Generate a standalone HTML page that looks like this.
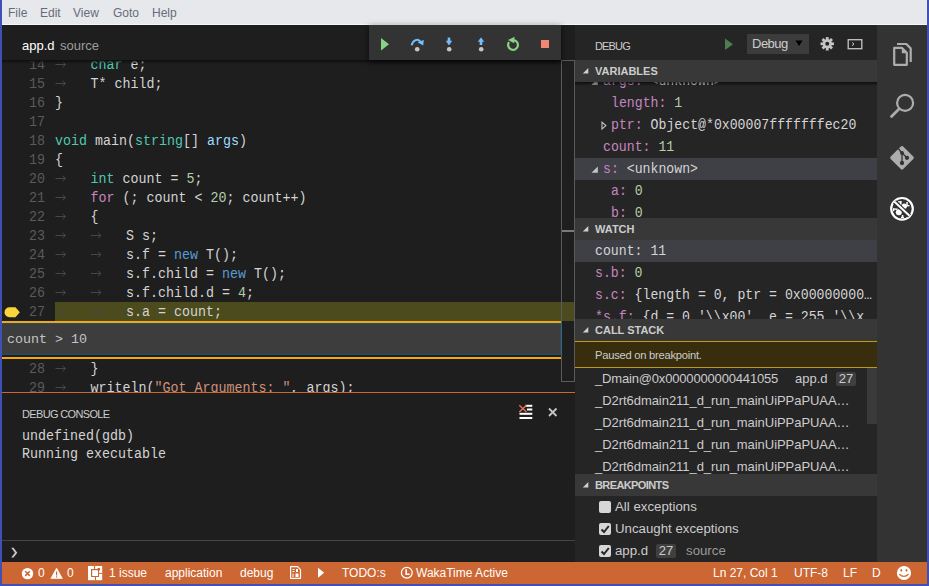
<!DOCTYPE html>
<html><head><meta charset="utf-8">
<style>
*{margin:0;padding:0;box-sizing:border-box}
html,body{width:929px;height:586px;overflow:hidden;background:#3f51b5}
body{position:relative;font-family:"Liberation Sans",sans-serif}
.a{position:absolute;white-space:pre}
.mono{font-family:"Liberation Mono",monospace}
#menu{left:2px;top:0;width:925px;height:25px;background:#e7e8eb;border-bottom:1px solid #f7f7f7}
#menu span{position:absolute;top:6px;font-size:12px;color:#656c7c}
#edtitle{left:2px;top:25px;width:573px;height:35px;background:#1e1e1e}
#editor{left:2px;top:60px;width:573px;height:332px;background:#1e1e1e;overflow:hidden}
.ln{position:absolute;left:0;width:43px;text-align:right;font-family:"Liberation Mono",monospace;font-size:13.33px;color:#5a5a5a;line-height:19px;height:19px;transform:translateY(0.8px) scaleY(1.14);transform-origin:0 10.3px}
.cl{position:absolute;left:53px;font-family:"Liberation Mono",monospace;font-size:13.33px;color:#d4d4d4;line-height:19px;height:19px;white-space:pre;transform:translateY(0.8px) scaleY(1.14);transform-origin:0 10.3px}
.tabs{position:absolute;left:0;top:0;height:19px;width:300px}
.ar2{position:absolute;top:9px;width:10.5px;height:1px;background:#474747}
.ar2:after{content:"";position:absolute;right:0;top:-2.5px;width:4px;height:4px;border-top:1px solid #474747;border-right:1px solid #474747;transform:rotate(45deg);transform-origin:100% 0}
.kt{color:#4ec9b0}.kf{color:#c586c0}.kn{color:#569cd6}.nu{color:#b5cea8}.ar{color:#9cdcfe}.st{color:#ce9178}
#panel{left:2px;top:392px;width:573px;height:170px;background:#1e1e1e;border-top:1px solid #cc6633}
#side{left:575px;top:25px;width:302px;height:537px;background:#252526;overflow:hidden}
#act{left:877px;top:25px;width:50px;height:537px;background:#333333}
#status{left:2px;top:562px;width:925px;height:22px;background:#cc6633;color:#fff;font-size:12px}
#status .a{top:4px}
.hdr{position:absolute;left:0;width:302px;height:22px;background:#383838;font-weight:bold;font-size:11px;color:#cccccc}
.hdr .tw{position:absolute;left:7px;top:8px;width:0;height:0;border-left:6px solid transparent;border-bottom:6px solid #c5c5c5}
.hdr span{position:absolute;left:20px;top:5px}
.row{position:absolute;left:0;width:302px;height:22px;font-family:"Liberation Mono",monospace;font-size:13.2px;color:#d4d4d4;line-height:22px;white-space:pre}
.row span.a{transform:scaleY(1.1);transform-origin:0 14.5px}
.vn{color:#c586c0}.vv{color:#b5cea8}
.cs{position:absolute;left:20px;height:22px;line-height:22px;font-size:13px;color:#cccccc;white-space:pre}
</style></head><body>
<div id="menu" class="a"><span style="left:6px">File</span><span style="left:38px">Edit</span><span style="left:71px">View</span><span style="left:111px">Goto</span><span style="left:150px">Help</span></div>

<div id="edtitle" class="a"><span class="a" style="left:20px;top:13px;font-size:13px;color:#ffffff">app.d</span><span class="a" style="left:58px;top:13px;font-size:13px;color:#9d9d9d">source</span></div>

<div id="editor" class="a">
<div class="a" style="left:53px;top:242px;width:520px;height:19px;background:#4b4b1e"></div>
<svg class="a" style="left:2px;top:247px" width="18" height="11"><path d="M5.5 0.3H11.5L15.8 5.3L11.5 10.3H5.5A5 5 0 0 1 5.5 0.3Z" fill="#f9d43a"/></svg>
<div class="a" style="left:0;top:261px;width:559px;height:2px;background:#ffa500"></div>
<div class="a" style="left:0;top:263px;width:559px;height:32px;background:#3d3d3d;border:1px solid #0d5486;border-left:none"></div>
<div class="a mono" style="left:5px;top:264px;height:32px;line-height:32px;font-size:13.33px;color:#c4c4c4">count &gt; 10</div>
<div class="a" style="left:0;top:297px;width:559px;height:2px;background:#ffa500"></div>
<div class="a" style="left:559px;top:0;width:14px;height:322px;border:1px solid #5a5a5a"></div>
<div class="a" style="left:560px;top:170px;width:12px;height:2px;background:#7a7a7a"></div>
<div class="ln" style="top:-5px">14</div>
<svg class="tabs" style="top:-5px" width="300" height="19"><g stroke="#474747" stroke-width="1" fill="none"><path d="M53.5 9.5H63.5M60.5 6.8L63.5 9.5L60.5 12.2"/></g></svg>
<div class="cl" style="top:-5px;left:88.5px"><span class="kt">char</span> e;</div>
<div class="ln" style="top:14px">15</div>
<svg class="tabs" style="top:14px" width="300" height="19"><g stroke="#474747" stroke-width="1" fill="none"><path d="M53.5 9.5H63.5M60.5 6.8L63.5 9.5L60.5 12.2"/></g></svg>
<div class="cl" style="top:14px;left:88.5px">T* child;</div>
<div class="ln" style="top:33px">16</div>
<div class="cl" style="top:33px;left:53.0px">}</div>
<div class="ln" style="top:52px">17</div>
<div class="cl" style="top:52px;left:53.0px"></div>
<div class="ln" style="top:71px">18</div>
<div class="cl" style="top:71px;left:53.0px"><span class="kt">void</span> main(<span class="kt">string</span>[] <span class="ar">args</span>)</div>
<div class="ln" style="top:90px">19</div>
<div class="cl" style="top:90px;left:53.0px">{</div>
<div class="ln" style="top:109px">20</div>
<svg class="tabs" style="top:109px" width="300" height="19"><g stroke="#474747" stroke-width="1" fill="none"><path d="M53.5 9.5H63.5M60.5 6.8L63.5 9.5L60.5 12.2"/></g></svg>
<div class="cl" style="top:109px;left:88.5px"><span class="kt">int</span> count = <span class="nu">5</span>;</div>
<div class="ln" style="top:128px">21</div>
<svg class="tabs" style="top:128px" width="300" height="19"><g stroke="#474747" stroke-width="1" fill="none"><path d="M53.5 9.5H63.5M60.5 6.8L63.5 9.5L60.5 12.2"/></g></svg>
<div class="cl" style="top:128px;left:88.5px"><span class="kf">for</span> (; count &lt; <span class="nu">20</span>; count++)</div>
<div class="ln" style="top:147px">22</div>
<svg class="tabs" style="top:147px" width="300" height="19"><g stroke="#474747" stroke-width="1" fill="none"><path d="M53.5 9.5H63.5M60.5 6.8L63.5 9.5L60.5 12.2"/></g></svg>
<div class="cl" style="top:147px;left:88.5px">{</div>
<div class="ln" style="top:166px">23</div>
<svg class="tabs" style="top:166px" width="300" height="19"><g stroke="#474747" stroke-width="1" fill="none"><path d="M53.5 9.5H63.5M60.5 6.8L63.5 9.5L60.5 12.2"/><path d="M89.0 9.5H99.0M96.0 6.8L99.0 9.5L96.0 12.2"/></g></svg>
<div class="cl" style="top:166px;left:124.0px">S s;</div>
<div class="ln" style="top:185px">24</div>
<svg class="tabs" style="top:185px" width="300" height="19"><g stroke="#474747" stroke-width="1" fill="none"><path d="M53.5 9.5H63.5M60.5 6.8L63.5 9.5L60.5 12.2"/><path d="M89.0 9.5H99.0M96.0 6.8L99.0 9.5L96.0 12.2"/></g></svg>
<div class="cl" style="top:185px;left:124.0px">s.f = <span class="kn">new</span> T();</div>
<div class="ln" style="top:204px">25</div>
<svg class="tabs" style="top:204px" width="300" height="19"><g stroke="#474747" stroke-width="1" fill="none"><path d="M53.5 9.5H63.5M60.5 6.8L63.5 9.5L60.5 12.2"/><path d="M89.0 9.5H99.0M96.0 6.8L99.0 9.5L96.0 12.2"/></g></svg>
<div class="cl" style="top:204px;left:124.0px">s.f.child = <span class="kn">new</span> T();</div>
<div class="ln" style="top:223px">26</div>
<svg class="tabs" style="top:223px" width="300" height="19"><g stroke="#474747" stroke-width="1" fill="none"><path d="M53.5 9.5H63.5M60.5 6.8L63.5 9.5L60.5 12.2"/><path d="M89.0 9.5H99.0M96.0 6.8L99.0 9.5L96.0 12.2"/></g></svg>
<div class="cl" style="top:223px;left:124.0px">s.f.child.d = <span class="nu">4</span>;</div>
<div class="ln" style="top:242px">27</div>
<svg class="tabs" style="top:242px" width="300" height="19"><g stroke="#474747" stroke-width="1" fill="none"><path d="M53.5 9.5H63.5M60.5 6.8L63.5 9.5L60.5 12.2"/><path d="M89.0 9.5H99.0M96.0 6.8L99.0 9.5L96.0 12.2"/></g></svg>
<div class="cl" style="top:242px;left:124.0px">s.a = count;</div>
<div class="ln" style="top:299px">28</div>
<svg class="tabs" style="top:299px" width="300" height="19"><g stroke="#474747" stroke-width="1" fill="none"><path d="M53.5 9.5H63.5M60.5 6.8L63.5 9.5L60.5 12.2"/></g></svg>
<div class="cl" style="top:299px;left:88.5px">}</div>
<div class="ln" style="top:318px">29</div>
<svg class="tabs" style="top:318px" width="300" height="19"><g stroke="#474747" stroke-width="1" fill="none"><path d="M53.5 9.5H63.5M60.5 6.8L63.5 9.5L60.5 12.2"/></g></svg>
<div class="cl" style="top:318px;left:88.5px">writeln(<span class="st">"Got Arguments: "</span>, args);</div>
</div>


<div class="a" style="left:2px;top:60px;width:559px;height:4px;background:linear-gradient(#0e0e0e,rgba(30,30,30,0))"></div>
<div id="dbgbar" class="a" style="left:369px;top:25px;width:192px;height:35px;background:#333333;box-shadow:0 2px 6px rgba(0,0,0,0.7)">
<svg width="192" height="35" style="position:absolute;left:0;top:0">
<path d="M12 13L20 19.2L12 25.4Z" fill="#89d185"/>
<path d="M42.6 20.3C44 15 49 13 51.8 17" stroke="#75beff" stroke-width="2" fill="none"/>
<path d="M48.5 17.2L54.8 15L54.2 20.5Z" fill="#75beff"/>
<circle cx="48.2" cy="24.3" r="2.3" fill="#c5c5c5"/>
<path d="M80 12.6V17.5" stroke="#75beff" stroke-width="2.6"/><path d="M77.3 16H82.7L80 20Z" fill="#75beff" stroke="#75beff" stroke-width="0.6" stroke-linejoin="round"/>
<circle cx="80.2" cy="24.3" r="2.3" fill="#c5c5c5"/>
<path d="M112 15.5V20" stroke="#75beff" stroke-width="2.6"/><path d="M109.3 16.6H114.7L112 12.8Z" fill="#75beff" stroke="#75beff" stroke-width="0.6" stroke-linejoin="round"/>
<circle cx="112.2" cy="24.3" r="2.3" fill="#c5c5c5"/>
<path d="M143.5 15.1A4.9 4.9 0 1 1 140 17.2" stroke="#89d185" stroke-width="2.2" fill="none"/>
<path d="M145.6 11.8L145.2 18.2L139 15Z" fill="#89d185"/>
<rect x="172" y="15" width="8" height="8" fill="#f48771"/>
</svg></div>
<div id="panel" class="a">
<div class="a" style="left:20px;top:15px;font-size:11px;color:#cccccc;letter-spacing:-0.65px">DEBUG CONSOLE</div>
<div class="a mono" style="left:20px;top:35px;font-size:13.33px;line-height:18px;color:#d4d4d4;transform:scaleY(1.1);transform-origin:0 12.5px">undefined(gdb)</div>
<div class="a mono" style="left:20px;top:53px;font-size:13.33px;line-height:18px;color:#d4d4d4;transform:scaleY(1.1);transform-origin:0 12.5px">Running executable</div>
<svg class="a" style="left:514px;top:10px" width="20" height="20"><g fill="#ffffff"><rect x="9.5" y="1.8" width="6.8" height="2"/><rect x="11" y="5.5" width="5.3" height="2"/><rect x="3.5" y="9.8" width="12.8" height="2"/><rect x="3.5" y="14" width="12.8" height="2"/></g><path d="M3.3 2.2L10.5 9M10.5 2.2L3.3 9" stroke="#e8775a" stroke-width="1.3"/></svg>
<svg class="a" style="left:544px;top:12px" width="14" height="14"><path d="M3 3.5L10.5 11M10.5 3.5L3 11" stroke="#c5c5c5" stroke-width="1.8"/></svg>
<div class="a" style="left:0;top:147px;width:573px;height:1px;background:#454545"></div>
<svg class="a" style="left:8px;top:154px" width="10" height="12"><path d="M1.2 0.8H3.6L7.3 5.7L3.6 10.6H1.2L4.9 5.7Z" fill="#c5c5c5"/></svg>
</div>
<div id="side" class="a">
<div class="a" style="left:20px;top:15px;font-size:11px;color:#cccccc;letter-spacing:-0.85px">DEBUG</div>
<svg class="a" style="left:149px;top:13px" width="10" height="13"><path d="M1 0.5L9 6.2L1 12Z" fill="#4f7c50"/></svg>
<div class="a" style="left:172px;top:9px;width:62px;height:20px;background:#3c3c3c"></div>
<div class="a" style="left:177px;top:11px;font-size:13px;color:#cccccc;letter-spacing:-0.5px">Debug</div>
<svg class="a" style="left:220px;top:15px" width="8" height="7"><path d="M0.5 0.5H7.5L4 6Z" fill="#000"/></svg>
<svg class="a" style="left:245px;top:12px" width="15" height="15"><g fill="#c5c5c5"><rect x="5.85" y="0.09999999999999964" width="2.8" height="3.2" transform="rotate(0 7.25 6.8)"/><rect x="5.85" y="0.09999999999999964" width="2.8" height="3.2" transform="rotate(45 7.25 6.8)"/><rect x="5.85" y="0.09999999999999964" width="2.8" height="3.2" transform="rotate(90 7.25 6.8)"/><rect x="5.85" y="0.09999999999999964" width="2.8" height="3.2" transform="rotate(135 7.25 6.8)"/><rect x="5.85" y="0.09999999999999964" width="2.8" height="3.2" transform="rotate(180 7.25 6.8)"/><rect x="5.85" y="0.09999999999999964" width="2.8" height="3.2" transform="rotate(225 7.25 6.8)"/><rect x="5.85" y="0.09999999999999964" width="2.8" height="3.2" transform="rotate(270 7.25 6.8)"/><rect x="5.85" y="0.09999999999999964" width="2.8" height="3.2" transform="rotate(315 7.25 6.8)"/><circle cx="7.25" cy="6.8" r="4.6"/></g><circle cx="7.25" cy="6.8" r="2" fill="#252526"/></svg>
<svg class="a" style="left:272px;top:14px" width="16" height="11"><rect x="1.2" y="0.7" width="13.6" height="9" fill="none" stroke="#c5c5c5" stroke-width="1.3"/><path d="M5 3.4L7 5.1L5 6.8" stroke="#c5c5c5" stroke-width="1" fill="none"/></svg>
<div class="hdr" style="top:35px"><svg class="a" style="left:7px;top:7px" width="8" height="8"><path d="M0.8 6.5L6.3 1V6.5Z" fill="#d0d0d0"/></svg><span>VARIABLES</span></div>
<div class="a" style="left:0;top:57px;width:302px;height:136px;overflow:hidden">
<div class="row" style="top:-12px;"><svg class="a" style="left:16px;top:8px" width="8" height="8"><path d="M0.5 6.8L6.8 0.5V6.8Z" fill="#c5c5c5"/></svg><span class="a" style="left:28px;top:1px"><span class="vn">args:</span> &lt;unknown&gt;</span></div>
<div class="row" style="top:10px;"><span class="a" style="left:36px;top:1px"><span class="vn">length:</span> <span class="vv">1</span></span></div>
<div class="row" style="top:32px;"><svg class="a" style="left:25.5px;top:7px" width="8" height="10"><path d="M1 1.2L4.9 4.6L1 8Z" fill="none" stroke="#c5c5c5" stroke-width="1.1"/></svg><span class="a" style="left:36px;top:1px"><span class="vn">ptr:</span> Object@*0x00007fffffffec20</span></div>
<div class="row" style="top:54px;"><span class="a" style="left:28px;top:1px"><span class="vn">count:</span> <span class="vv">11</span></span></div>
<div class="row" style="top:76px;background:#3f3f46;"><svg class="a" style="left:16px;top:8px" width="8" height="8"><path d="M0.5 6.8L6.8 0.5V6.8Z" fill="#c5c5c5"/></svg><span class="a" style="left:28px;top:1px"><span class="vn">s:</span> &lt;unknown&gt;</span></div>
<div class="row" style="top:98px;"><span class="a" style="left:36px;top:1px"><span class="vn">a:</span> <span class="vv">0</span></span></div>
<div class="row" style="top:120px;"><span class="a" style="left:36px;top:1px"><span class="vn">b:</span> <span class="vv">0</span></span></div>
<div class="a" style="left:0;top:0;width:302px;height:4px;background:linear-gradient(rgba(0,0,0,0.6),rgba(0,0,0,0))"></div>
</div>
<div class="hdr" style="top:193px"><svg class="a" style="left:7px;top:7px" width="8" height="8"><path d="M0.8 6.5L6.3 1V6.5Z" fill="#d0d0d0"/></svg><span>WATCH</span></div>
<div class="a" style="left:0;top:215px;width:302px;height:79px;overflow:hidden">
<div class="row" style="top:0px;background:#3f3f46;"><span class="a" style="left:20px;top:1px"><span style="color:#d4d4d4">count: 11</span></span></div>
<div class="row" style="top:22px;"><span class="a" style="left:20px;top:1px"><span class="vn">s.b:</span> <span class="vv">0</span></span></div>
<div class="row" style="top:44px;"><span class="a" style="left:20px;top:1px"><span class="vn">s.c:</span> {length = 0, ptr = 0x00000000…</span></div>
<div class="row" style="top:66px;"><span class="a" style="left:20px;top:1px"><span class="vn">*s.f:</span> {d = 0 '\\x00', e = 255 '\\x</span></div>
</div>
<div class="hdr" style="top:294px"><svg class="a" style="left:7px;top:7px" width="8" height="8"><path d="M0.8 6.5L6.3 1V6.5Z" fill="#d0d0d0"/></svg><span>CALL STACK</span></div>
<div class="a" style="left:0;top:316px;width:302px;height:27px;background:#382d0d;border-top:1px solid #c09a1a;border-bottom:1px solid #c09a1a"></div>
<div class="a" style="left:20px;top:323.5px;font-size:11.2px;color:#cccccc;letter-spacing:-0.25px">Paused on breakpoint.</div>
<div class="a" style="left:0;top:343px;width:302px;height:106px;overflow:hidden">
<div class="cs" style="top:0px;letter-spacing:-0.17px">_Dmain@0x0000000000441055</div>
<div class="cs" style="top:22px;letter-spacing:-0.05px">_D2rt6dmain211_d_run_mainUiPPaPUAA…</div>
<div class="cs" style="top:44px;letter-spacing:-0.05px">_D2rt6dmain211_d_run_mainUiPPaPUAA…</div>
<div class="cs" style="top:66px;letter-spacing:-0.05px">_D2rt6dmain211_d_run_mainUiPPaPUAA…</div>
<div class="cs" style="top:88px;letter-spacing:-0.05px">_D2rt6dmain211_d_run_mainUiPPaPUAA…</div>
<div class="a" style="left:220px;top:0;font-size:13px;line-height:22px;color:#cccccc">app.d</div>
<div class="a" style="left:261px;top:4px;width:20px;height:13.5px;background:#3f3f3f;border-radius:2px;font-size:13px;line-height:13.5px;color:#cccccc;text-align:center">27</div>
<div class="a" style="left:292px;top:0;width:10px;height:56px;background:#3a3a3a"></div>
</div>
<div class="hdr" style="top:449px;letter-spacing:-0.6px"><svg class="a" style="left:7px;top:7px" width="8" height="8"><path d="M0.8 6.5L6.3 1V6.5Z" fill="#d0d0d0"/></svg><span>BREAKPOINTS</span></div>
<svg class="a" style="left:24px;top:476px" width="12" height="12"><rect x="0" y="0" width="12" height="12" rx="2" fill="#d6d6d6"/></svg><div class="cs" style="left:40px;top:471px;font-size:13.25px">All exceptions</div>
<svg class="a" style="left:24px;top:498px" width="12" height="12"><rect x="0" y="0" width="12" height="12" rx="2" fill="#d6d6d6"/><path d="M2.5 6.5L5 9L9.8 3" stroke="#252526" stroke-width="2" fill="none"/></svg><div class="cs" style="left:40px;top:493px;font-size:13.25px">Uncaught exceptions</div>
<svg class="a" style="left:24px;top:520px" width="12" height="12"><rect x="0" y="0" width="12" height="12" rx="2" fill="#d6d6d6"/><path d="M2.5 6.5L5 9L9.8 3" stroke="#252526" stroke-width="2" fill="none"/></svg><div class="cs" style="left:40px;top:515px;font-size:13.25px">app.d</div>
<div class="a" style="left:81px;top:519px;width:20px;height:13.5px;background:#3f3f3f;border-radius:2px;font-size:13px;line-height:13.5px;color:#cccccc;text-align:center">27</div>
<div class="cs" style="left:111px;top:515px;color:#9a9a9a;font-size:13.25px">source</div>
</div>
<div id="act" class="a"><svg width="50" height="537" viewBox="877 25 50 537" style="position:absolute;left:0;top:0">
<g fill="none" stroke="#adadad" stroke-width="2.2" stroke-linejoin="round">
<path d="M894.2 47.8H901.8L906.8 52.8V64.8H894.2Z"/>
<path d="M897 44H906.3L910.7 48.4V62"/>
</g>
<path d="M901.8 47.8V53.2H906.8Z" fill="#adadad"/>
<g stroke="#adadad" fill="none"><circle cx="905.1" cy="102.9" r="8" stroke-width="2.2"/><path d="M899 109L891.5 116.5" stroke-width="2.8" stroke-linecap="round"/></g>
<path d="M900.8 146.5Q902 145.3 903.2 146.5L913.3 156.6Q914.5 157.8 913.3 159L903.2 169.1Q902 170.3 900.8 169.1L890.7 159Q889.5 157.8 890.7 156.6Z" fill="#adadad"/>
<g stroke="#333333" stroke-width="1.3" fill="#333333"><path d="M898.3 148.5L902 153L902 163M902 153L907 157.8" fill="none"/><circle cx="902" cy="153" r="1.3"/><circle cx="902" cy="163" r="1.5"/><circle cx="907" cy="157.8" r="1.5"/></g>
<circle cx="902" cy="208.8" r="10.8" stroke="#ffffff" stroke-width="2.2" fill="none"/>
<g fill="#ffffff"><circle cx="898.8" cy="212.2" r="3"/><circle cx="904.3" cy="206.2" r="2.6"/><rect x="899.7" y="201.2" width="1.8" height="3.8"/><rect x="898" y="201.2" width="3.5" height="1.3"/><rect x="906.3" y="202" width="1.5" height="3.5"/><rect x="906.5" y="205" width="3" height="1.4"/><rect x="893" y="208.4" width="4.5" height="1.4"/><rect x="893" y="208.4" width="1.3" height="2.8"/><rect x="901.8" y="215" width="1.5" height="3"/><rect x="901" y="216.8" width="3" height="1.2"/></g>
<path d="M894.5 201.8L909.5 215.8" stroke="#333333" stroke-width="4.5"/>
<path d="M894.5 201.8L909.5 215.8" stroke="#ffffff" stroke-width="2"/>
</svg></div>
<div id="status" class="a"><svg width="925" height="22" viewBox="2 562 925 22" style="position:absolute;left:0;top:0">
<circle cx="27.5" cy="573.6" r="5.7" fill="#fff"/><path d="M25.2 571.3L29.8 575.9M29.8 571.3L25.2 575.9" stroke="#cc6633" stroke-width="1.5"/>
<path d="M56.6 568L62.4 578.5H50.8Z" fill="#fff" stroke="#fff" stroke-width="0.6" stroke-linejoin="round"/><rect x="56" y="571.5" width="1.2" height="4" fill="#cc6633"/><rect x="56" y="576.3" width="1.2" height="1.2" fill="#cc6633"/>
<rect x="88" y="566" width="14.2" height="14.2" fill="#fff"/><rect x="91" y="569" width="8" height="8" fill="#cc6633"/><rect x="92.2" y="570.2" width="5.8" height="5.8" fill="#fff"/><g fill="#cc6633"><rect x="94" y="566" width="1.1" height="3"/><rect x="99" y="572.9" width="3.2" height="1"/><rect x="95" y="577" width="1" height="3.2"/><rect x="97.5" y="568" width="2.5" height="2.5"/></g>
<path d="M290.6 566.6H297.5L300.5 569.6V578.3H290.6Z" fill="none" stroke="#fff" stroke-width="1.2" stroke-linejoin="round"/>
<g fill="#fff"><rect x="292.5" y="569" width="2" height="1"/><rect x="292.5" y="571" width="2" height="1"/><rect x="296" y="569" width="2" height="3"/><rect x="292.5" y="573.5" width="1" height="3.5"/><rect x="295.5" y="573.5" width="3" height="3.5"/></g>
<path d="M318 567.7L324.2 572.7L318 577.8Z" fill="#fff"/>
<circle cx="406.8" cy="572.7" r="5.4" fill="none" stroke="#fff" stroke-width="1.3"/><path d="M406.2 569.2V574.2H409.6" fill="none" stroke="#fff" stroke-width="1.6"/>
<circle cx="904" cy="573" r="7.1" fill="#fff"/><ellipse cx="901.3" cy="570.3" rx="0.9" ry="1.4" fill="#cc6633"/><ellipse cx="906.5" cy="570.3" rx="0.9" ry="1.4" fill="#cc6633"/><path d="M899.3 574.3Q903.9 578.5 908.5 574.3" stroke="#cc6633" stroke-width="1.2" fill="none"/>
</svg>
<span class="a" style="left:36px">0</span>
<span class="a" style="left:65px">0</span>
<span class="a" style="left:107px">1 issue</span>
<span class="a" style="left:163px">application</span>
<span class="a" style="left:238px">debug</span>
<span class="a" style="left:340px">TODO:s</span>
<span class="a" style="left:414px">WakaTime Active</span>
<span class="a" style="left:711px">Ln 27, Col 1</span>
<span class="a" style="left:792px">UTF-8</span>
<span class="a" style="left:841px">LF</span>
<span class="a" style="left:870px">D</span>
</div>
</body></html>
